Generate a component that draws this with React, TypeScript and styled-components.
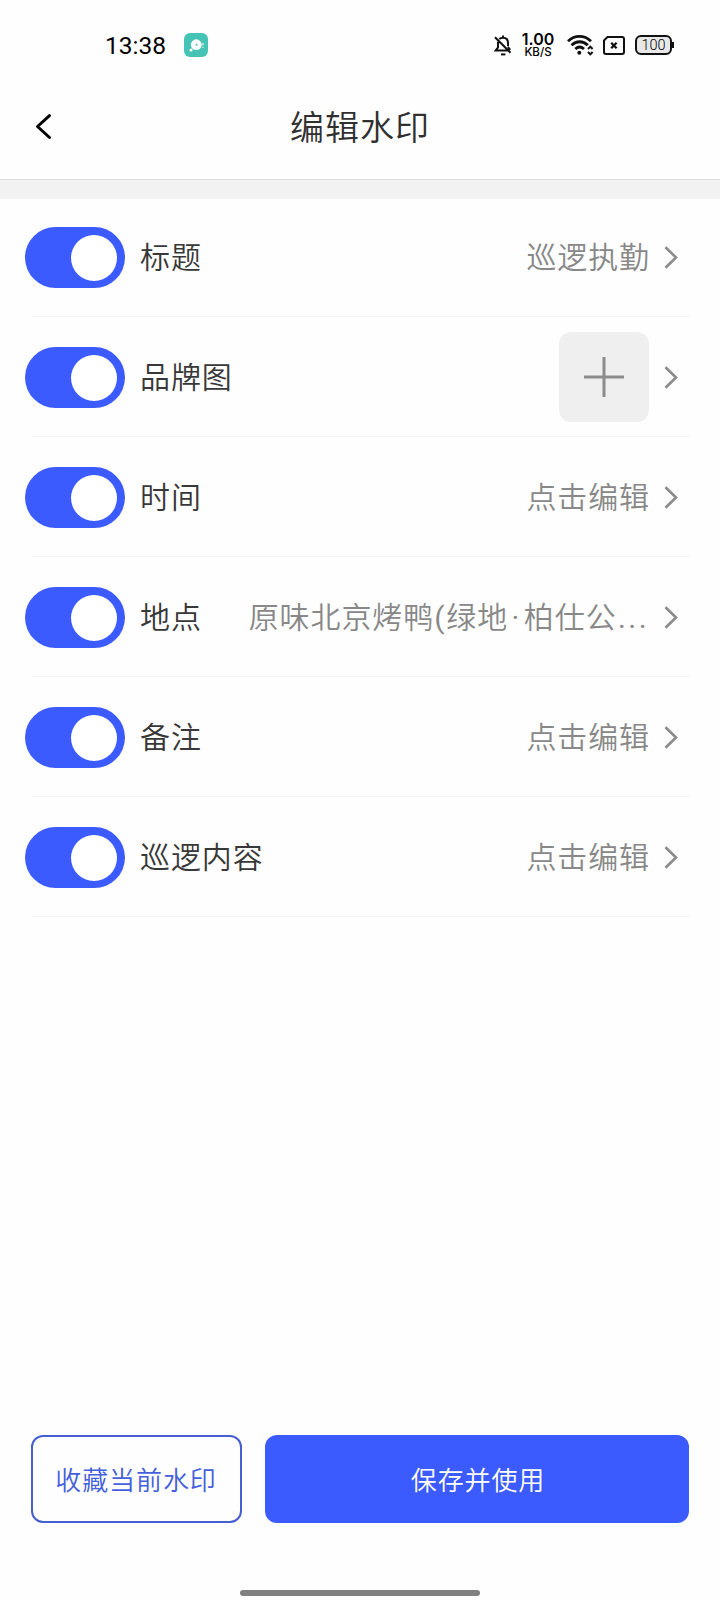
import React from 'react';
import styled, { createGlobalStyle } from 'styled-components';

const GlobalStyle = createGlobalStyle`
  * { box-sizing: border-box; }
  body {
    margin: 0;
    background: #fefefe;
    font-family: Roboto, "Noto Sans CJK SC", sans-serif;
  }
`;

const Screen = styled.div`
  display: flex;
  flex-direction: column;
  width: 720px;
  height: 1600px;
  overflow: hidden;
  background: #fefefe;
`;

const StatusBar = styled.div`
  display: flex;
  align-items: center;
  justify-content: space-between;
  height: 90px;
  padding: 0 46px 0 105px;
  color: #000;
`;

const StatusGroup = styled.div`
  display: flex;
  align-items: center;
`;

const Clock = styled.span`
  width: 79px;
  padding-top: 1px;
  font: 400 24.5px/30px Roboto, sans-serif;
`;

const NetSpeed = styled.div`
  display: flex;
  flex-direction: column;
  align-items: center;
  gap: 2px;
  width: 34px;
  margin: 0 12px 0 9px;
  font-family: Inter, sans-serif;
`;

const SpeedValue = styled.span`
  font-size: 16px;
  font-weight: 600;
  line-height: 12px;
`;

const SpeedUnit = styled.span`
  font-size: 11.5px;
  font-weight: 550;
  line-height: 10px;
`;

const SimOffSlot = styled.span`
  display: flex;
  margin-left: 9px;
`;

const Battery = styled.div`
  display: flex;
  align-items: center;
`;

const BatteryBody = styled.div`
  display: flex;
  align-items: center;
  justify-content: center;
  width: 37px;
  height: 20px;
  margin-left: 10px;
  padding-top: 1px;
  border: 2px solid #111;
  border-radius: 6px;
  background: #e8e8e8;
  font: 350 14.5px/16px Roboto, sans-serif;
`;

const BatteryTip = styled.div`
  width: 2px;
  height: 6px;
  background: #111;
`;

const Header = styled.header`
  display: grid;
  grid-template-columns: 88px 1fr 88px;
  align-items: center;
  height: 90px;
  padding-bottom: 15px;
  border-bottom: 1px solid #dcdcdc;
`;

const BackButton = styled.button`
  display: flex;
  justify-content: flex-start;
  padding: 0 0 1px 34px;
  border: 0;
  background: none;
`;

const Title = styled.h1`
  margin: 0;
  padding-top: 1px;
  color: #303030;
  font-size: 34px;
  font-weight: 350;
  line-height: 48px;
  letter-spacing: 1px;
  text-align: center;
`;

const Gap = styled.div`
  height: 19px;
  background: #f2f2f2;
`;

const List = styled.main`
  flex: 1;
  margin-top: -2px;
`;

const Row = styled.div`
  display: flex;
  align-items: center;
  height: 120px;
  padding: 1px 42px 0 25px;
  background: linear-gradient(#f5f5f5, #f5f5f5) 32px 100% / 658px 1px no-repeat;
`;

const Toggle = styled.button`
  display: flex;
  align-items: center;
  justify-content: flex-end;
  flex: none;
  width: 100px;
  height: 61px;
  padding: 0 8px;
  border: 0;
  border-radius: 31px;
  background: #3c5bfe;
`;

const Knob = styled.span`
  width: 46px;
  height: 46px;
  border-radius: 50%;
  background: #fff;
`;

const Label = styled.span`
  flex: 1;
  margin-left: 15px;
  padding-top: 1px;
  color: #383838;
  font-size: 30px;
  font-weight: 350;
  line-height: 44px;
  letter-spacing: 0.9px;
  white-space: nowrap;
`;

const Value = styled.span`
  margin-right: 14px;
  padding-top: 1px;
  color: #888;
  font-size: 30px;
  font-weight: 350;
  line-height: 44px;
  letter-spacing: 0.9px;
  white-space: nowrap;
`;

const Paren = styled.span`
  margin-right: 1px;
  font-weight: 400;
`;

const MiddleDot = styled.span`
  margin: 0 3.5px;
  font-weight: 400;
`;

const Dots = styled.span`
  margin: 0 1px 0 1.5px;
  font-weight: 400;
  letter-spacing: 2.4px;
`;

const AddImage = styled.button`
  display: flex;
  align-items: center;
  justify-content: center;
  width: 90px;
  height: 90px;
  margin: 0 15px 2px 0;
  padding: 0;
  border: 0;
  border-radius: 12px;
  background: #efefef;
`;

const ChevronSlot = styled.span`
  display: flex;
  padding-bottom: 1px;
`;

const Footer = styled.footer`
  display: flex;
  gap: 23px;
  height: 88px;
  margin: 0 31px 67px;
`;

const ActionButton = styled.button<{ $primary?: boolean }>`
  flex: ${(p) => (p.$primary ? '1' : '0 0 211px')};
  padding: ${(p) => (p.$primary ? '0 0 1px 2px' : '0 1px 1px 0')};
  border: ${(p) => (p.$primary ? '0' : '2px solid #465fd0')};
  border-radius: 12px;
  background: ${(p) => (p.$primary ? '#3c5bfe' : '#fefefe')};
  color: ${(p) => (p.$primary ? '#fff' : '#4560dc')};
  font-family: inherit;
  font-size: 26px;
  font-weight: 350;
  letter-spacing: 0.9px;
`;

const HomeIndicator = styled.div`
  width: 240px;
  height: 6px;
  margin: 0 auto 4px;
  border-radius: 3px;
  background: #808080;
`;

const AppBadge = () => (
  <svg width="24" height="24" viewBox="0 0 24 24">
    <rect width="24" height="24" rx="6" fill="#45c3b4" />
    <circle cx="12.3" cy="11.7" r="5.4" fill="#fff" />
    <circle cx="12.5" cy="11.8" r="1" fill="#45c3b4" />
    <circle cx="7" cy="17" r="1.6" fill="#fff" />
    <path d="M19 10v2.6M19 14v1" stroke="#c5eee8" strokeWidth="1.6" />
  </svg>
);

const MutedBell = () => (
  <svg width="18" height="21" viewBox="0 0 18 21" fill="none" stroke="#111" strokeWidth="2">
    <path d="M5.2 4.1C6.2 3.2 7.4 2.7 9 2.7c3.2 0 5 2.3 5 5.3v3.2M9 2.7V.6M4 6.8v5.6L1.6 15.6h12.2M1 2.2l15.5 15.5M14 12l2.2 2.8" />
    <path d="M7 19.4h4.4" />
  </svg>
);

const Wifi = () => (
  <svg width="27" height="22" viewBox="0 0 27 22" fill="none" stroke="#111">
    <path d="M1 7.2c6.7-6.5 16.3-6.5 23 0M4.5 11.2c4.8-4.6 11.6-4.6 16.3 0M8.3 15c2.7-2.5 6-2.5 8.7 0" strokeWidth="2.8" />
    <circle cx="12.3" cy="18.8" r="2" fill="#111" stroke="none" />
    <path d="M21 15l2.3-2.4L25.6 15M21 18l2.3 2.4 2.3-2.4" strokeWidth="2" />
  </svg>
);

const SimOff = () => (
  <svg width="22" height="19" viewBox="0 0 22 19" fill="none" stroke="#111" strokeWidth="2">
    <path d="M4.5 1H19a2 2 0 0 1 2 2v13a2 2 0 0 1-2 2H3a2 2 0 0 1-2-2V4.5z" />
    <path d="M8.2 6.8l5.4 5.4M13.6 6.8l-5.4 5.4" strokeWidth="2.3" />
  </svg>
);

const Chevron = () => (
  <ChevronSlot>
    <svg width="14" height="23" viewBox="0 0 14 23" fill="none" stroke="#8c8c8c" strokeWidth="2.7">
      <path d="M1.5 1.2L12 11.5 1.5 21.8" />
    </svg>
  </ChevronSlot>
);

const rows: { label: string; value?: React.ReactNode }[] = [
  { label: '标题', value: '巡逻执勤' },
  { label: '品牌图' },
  { label: '时间', value: '点击编辑' },
  {
    label: '地点',
    value: (
      <>
        原味北京烤鸭<Paren>(</Paren>绿地<MiddleDot>·</MiddleDot>柏仕公<Dots>...</Dots>
      </>
    ),
  },
  { label: '备注', value: '点击编辑' },
  { label: '巡逻内容', value: '点击编辑' },
];

export default function App() {
  return (
    <>
      <GlobalStyle />
      <Screen>
        <StatusBar>
          <StatusGroup>
            <Clock>13:38</Clock>
            <AppBadge />
          </StatusGroup>
          <StatusGroup>
            <MutedBell />
            <NetSpeed>
              <SpeedValue>1.00</SpeedValue>
              <SpeedUnit>KB/S</SpeedUnit>
            </NetSpeed>
            <Wifi />
            <SimOffSlot>
              <SimOff />
            </SimOffSlot>
            <Battery>
              <BatteryBody>100</BatteryBody>
              <BatteryTip />
            </Battery>
          </StatusGroup>
        </StatusBar>
        <Header>
          <BackButton aria-label="返回">
            <svg width="18" height="27" viewBox="0 0 18 27" fill="none" stroke="#000" strokeWidth="3" strokeLinecap="round" strokeLinejoin="round">
              <path d="M15.5 2.7L3.5 13.5l12 11" />
            </svg>
          </BackButton>
          <Title>编辑水印</Title>
        </Header>
        <Gap />
        <List>
          {rows.map((row) => (
            <Row key={row.label}>
              <Toggle role="switch" aria-checked="true">
                <Knob />
              </Toggle>
              <Label>{row.label}</Label>
              {row.value ? (
                <Value>{row.value}</Value>
              ) : (
                <AddImage>
                  <svg width="40" height="40" viewBox="0 0 40 40" stroke="#8c8c8c" strokeWidth="3">
                    <path d="M20 0v40M0 20h40" />
                  </svg>
                </AddImage>
              )}
              <Chevron />
            </Row>
          ))}
        </List>
        <Footer>
          <ActionButton>收藏当前水印</ActionButton>
          <ActionButton $primary>保存并使用</ActionButton>
        </Footer>
        <HomeIndicator />
      </Screen>
    </>
  );
}
